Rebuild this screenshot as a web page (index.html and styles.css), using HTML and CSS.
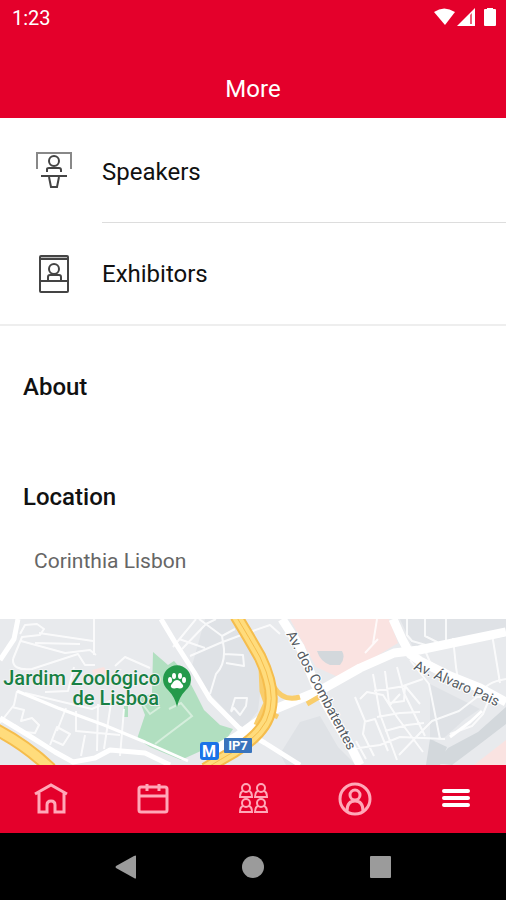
FILE: index.html
```html
<!DOCTYPE html>
<html lang="en">
<head>
<meta charset="utf-8">
<meta name="viewport" content="width=device-width, initial-scale=1">
<title>More</title>
<link rel="stylesheet" href="styles.css">
</head>
<body>
<header class="top">
  <div class="status">
    <span class="clock">1:23</span>
    <svg class="status-icons" viewBox="0 0 64 20" aria-hidden="true">
      <path d="M0 4Q10-3 21 4L11 17Z"/>
      <path d="M41 0V18H23Z"/>
      <path class="signal-gap" d="M36 7V16H38V5Z"/>
      <path d="M53 1V0H59V1H61Q62 1 62 2V17Q62 18 61 18H51Q50 18 50 17V2Q50 1 51 1Z"/>
    </svg>
  </div>
  <h1 class="title">More</h1>
</header>
<main class="content">
  <nav class="menu" aria-label="Event">
    <a class="row" href="#speakers">
      <svg class="row-icon" viewBox="0 0 40 40" aria-hidden="true">
        <path class="soft" d="M3 18V2H37V18"/>
        <circle cx="20" cy="10" r="5"/>
        <path d="M13 21V18Q13 17 15 17H25Q27 17 27 19V21M7 25H33M15 26L17 36H23L25 26"/>
      </svg>
      <span class="row-label">Speakers</span>
    </a>
    <a class="row" href="#exhibitors">
      <svg class="row-icon" viewBox="0 0 40 40" aria-hidden="true">
        <path class="band" d="M7 2H33V5H7Z"/>
        <rect x="6" y="2" width="28" height="36" rx="1"/>
        <path d="M6 5H34M6 27H34M14 26V23Q14 21 16 21H25Q27 21 27 23V26"/>
        <circle cx="20" cy="15" r="5"/>
      </svg>
      <span class="row-label">Exhibitors</span>
    </a>
  </nav>
  <section class="about"><h2 class="heading">About</h2></section>
  <section class="location">
    <h2 class="heading">Location</h2>
    <p class="venue">Corinthia Lisbon</p>
  </section>
  <svg class="map" viewBox="0 0 506 146" preserveAspectRatio="xMidYMid slice" role="img" aria-label="Map of the area around Corinthia Lisbon">
    <rect class="land" width="506" height="146"/>
    <path class="shade" d="M205 0H235L262 58 258 92 243 110 190 54ZM280 135L300 103 320 97 338 128 356 146H286ZM400 0H506V18L415 33ZM430 65L450 75 480 90 465 100 445 118 430 123Z"/>
    <path class="rose" d="M290 0H389L398 24 372 40 338 58 316 48ZM506 121L474 146H506ZM92 51L104 48 108 55 94 58Z"/>
    <path class="slate" d="M317 32H342Q346 39 340 46H330Q320 42 317 32ZM436 144L448 129 478 113 506 88V105L476 128 452 146ZM430 120L447 128 440 146H426Z"/>
    <path class="park" d="M153 33L168 46 174 42 185 54 196 75 204 91 220 106 233 110 224 124 203 131 181 141 150 128 137 120 145 96 138 78 152 75ZM124 87H128V98H124Z"/>
    <path class="trail" d="M137 78L150 95 160 88M155 125L192 97 181 84 169 90"/>
    <g class="lanes">
      <path d="M13 40L22 18 40 16 44 10 37 5 25 6 20 15M21 22L65 34 90 31 96 36M39 14L93 22M94 0V36M35 24L80 25M13 40Q12 52 32 50L78 35 85 46 95 46M115 47L125 38 150 49M17 72L14 86 0 104M25 74L92 90 110 82 126 86M66 89L57 112M74 48L68 72 45 73M12 88L24 91 21 102 32 99 39 106 35 114 24 113 15 106M50 126L57 108 70 115 63 126 52 121M76 92L76 112 120 116M98 85L97 132M111 84L104 130M85 116L81 137M124 90L120 137"/>
      <path d="M173 28L196 0M182 30L206 5 216 0M190 37L220 24 244 15 270 6 280 15M179 20L205 29M199 0L222 17 235 10M222 17L224 30Q225 46 216 55L210 75M224 35L243 36 244 47 226 44M231 92L235 79 247 79 246 87 240 96 234 89 231 93M203 135L215 128 219 140"/>
      <path d="M377 0L373 25M378 20L365 34M407 0V16L412 22 436 29M425 0V17L437 23 435 30M453 19L456 48 459 67M446 0V22M492 15L500 64M424 29L430 43 440 49M410 41L429 65 440 120M373 55L380 95 397 141M385 52L389 84 404 82 405 67M397 48L404 74 425 117M374 72L405 67 420 85M355 78L365 102 363 115 374 137M360 80L367 73 383 76 397 98 423 133M377 98L400 94 420 93M385 112L407 106 424 104M364 103L375 100 388 132M352 130L380 126 400 118 445 120M356 122L366 140M399 136L421 113 432 102 459 92 477 78 490 78 483 95 472 107 450 115M390 86L400 75M403 67L423 60M480 76Q485 63 506 60"/>
    </g>
    <g class="streets">
      <path d="M18 0L14 20 0 41M0 99L28 116 55 133 73 143 95 139 110 131 145 134 170 146"/>
      <path class="narrow" d="M17 72L58 89 104 106 145 123 188 142"/>
      <path d="M161 0L176 25 194 53 210 80 239 109 265 124 300 146"/>
      <path class="wide" d="M282 0L300 28 315 65 336 103 351 128 360 146"/>
      <path class="wide" d="M205 137L239 116 273 91 321 71 360 49 394 34 419 31 506 13"/>
      <path class="wide" d="M393 0L402 20 410 35 420 42 450 57 480 69 506 83"/>
      <path class="narrow" d="M450 118L470 103 482 92"/>
    </g>
    <g class="ramps">
      <path d="M261 48L262 72 266 84 256 106M274 68Q283 83 300 78M307 85L319 78M270 94L278 98"/>
    </g>
    <path class="highway-edge" d="M236 -3Q250 20 260 38Q275 69 270 91Q266 113 235 132Q221 140 205 150M-5 110Q26 126 51 150"/>
    <path class="highway" d="M236 -3Q250 20 260 38Q275 69 270 91Q266 113 235 132Q221 140 205 150M-5 110Q26 126 51 150"/>
    <path class="highway-line" d="M236 -3Q250 20 260 38Q275 69 270 91Q266 113 235 132Q221 140 205 150"/>
    <g class="place">
      <text x="160" y="66" text-anchor="end">Jardim Zoológico</text>
      <text x="159" y="86" text-anchor="end">de Lisboa</text>
    </g>
    <path class="pin" d="M177 88Q175 78 168 71A14 14 0 1 1 186 71Q179 78 177 88Z"/>
    <g class="paw">
      <ellipse cx="170" cy="61" rx="2" ry="3"/><ellipse cx="174" cy="57" rx="2" ry="3"/><ellipse cx="180" cy="57" rx="2" ry="3"/><ellipse cx="184" cy="61" rx="2" ry="3"/>
      <path d="M177 61C180 61 181 64 183 66C184 69 181 70 177 69C173 70 170 69 171 66C173 64 174 61 177 61Z"/>
    </g>
    <rect class="metro" x="200" y="123" width="19" height="18" rx="3"/>
    <text class="badge" x="209" y="138" font-size="16" text-anchor="middle">M</text>
    <rect class="route" x="224" y="119" width="28" height="15" rx="1"/>
    <text class="badge" x="238" y="131" font-size="13" text-anchor="middle">IP7</text>
    <text class="street" transform="translate(286 15) rotate(62)">Av. dos Combatentes</text>
    <text class="street" transform="translate(413 50) rotate(24)">Av. Álvaro Pais</text>
  </svg>
</main>
<nav class="tabs" aria-label="Main">
  <a class="tab" href="#home" aria-label="Home"><svg viewBox="0 0 36 36" aria-hidden="true"><path d="M2 13L18 4 34 13M6 12V31H14V24Q14 20 18 20Q22 20 22 24V31H31V12"/></svg></a>
  <a class="tab" href="#agenda" aria-label="Agenda"><svg viewBox="0 0 36 36" aria-hidden="true"><rect x="5" y="6" width="28" height="25" rx="2"/><path d="M5 15H33M13 3V10M25 3V10"/></svg></a>
  <a class="tab" href="#people" aria-label="People"><svg class="people" viewBox="0 0 36 36" aria-hidden="true"><g id="person"><circle cx="11" cy="7" r="4"/><path d="M8 10Q5 11 5 16H17Q17 11 14 10"/></g><use href="#person" x="15"/><use href="#person" y="15"/><use href="#person" x="15" y="15"/></svg></a>
  <a class="tab" href="#profile" aria-label="Profile"><svg viewBox="0 0 36 36" aria-hidden="true"><circle cx="19" cy="18" r="15"/><circle cx="19" cy="14" r="5"/><path d="M11 30Q11 20 19 20Q27 20 27 30"/></svg></a>
  <a class="tab active" href="#more" aria-label="More" aria-current="page"><svg viewBox="0 0 36 36" aria-hidden="true"><path d="M7 10H31M7 17H31M7 24H31"/></svg></a>
</nav>
<footer class="system">
  <button type="button" aria-label="Back"><svg viewBox="0 0 24 24" aria-hidden="true"><path d="M23 1V23Q23 24 21 23L3 13Q2 12 3 11L21 1Q23 0 23 1Z"/></svg></button>
  <button type="button" aria-label="Home screen"><svg viewBox="0 0 24 24" aria-hidden="true"><circle cx="12" cy="12" r="11"/></svg></button>
  <button type="button" aria-label="Recent apps"><svg viewBox="0 0 24 24" aria-hidden="true"><rect x="1" y="1" width="21" height="22" rx="1"/></svg></button>
</footer>
</body>
</html>
```
FILE: styles.css
```css
* { box-sizing: border-box; }
body {
  margin: 0;
  min-height: 100vh;
  display: flex;
  flex-direction: column;
  background: #fff;
  color: #111;
  font-family: Roboto, "Liberation Sans", sans-serif;
}
h1, h2, p { margin: 0; }
svg { display: block; }
a { color: inherit; text-decoration: none; }

.top { background: #e4002b; color: #fff; padding-bottom: 13px; }
.status {
  height: 36px;
  padding: 0 8px 0 12px;
  display: flex;
  align-items: center;
  justify-content: space-between;
}
.clock { font-size: 20px; line-height: 24px; }
.status-icons { width: 64px; height: 20px; fill: #fff; }
.status-icons .signal-gap { fill: #ee6078; }
.title {
  padding-top: 37px;
  font-size: 24px;
  line-height: 32px;
  font-weight: 400;
  text-align: center;
}

.content { flex: 1; display: flex; flex-direction: column; }
.menu { border-bottom: 2px solid #eee; }
.row { display: flex; align-items: center; gap: 28px; padding-left: 34px; }
.row-icon {
  width: 40px;
  height: 40px;
  fill: none;
  stroke: #444;
  stroke-width: 2;
}
.row-icon .soft { stroke: #888; }
.row-icon .band { fill: #bbb; stroke: none; }
.row-label {
  flex: 1;
  padding: 38px 0 34px;
  font-size: 24px;
  line-height: 32px;
}
.row + .row .row-label { padding-top: 35px; }
.row:first-child .row-label { border-bottom: 1px solid #ddd; }
.heading { font-size: 24px; line-height: 32px; font-weight: 500; }
.about { padding: 45px 23px 0; }
.location { padding: 78px 23px 42px; }
.venue {
  padding: 32px 11px 0;
  color: #666;
  font-size: 21px;
  line-height: 32px;
}

.map { width: 100%; flex: 1; min-height: 146px; font-family: Roboto, sans-serif; }
.land { fill: #e8eaed; }
.shade { fill: #dfe2e6; }
.rose { fill: #fae3e1; }
.slate { fill: #d3d8dc; }
.park { fill: #b1dfc0; }
.trail { fill: none; stroke: #d5eedc; stroke-width: 2; }
.lanes, .streets { fill: none; stroke: #fff; stroke-linejoin: round; }
.lanes { stroke-width: 2; opacity: .8; }
.streets { stroke-width: 5; }
.streets .narrow { stroke-width: 3; }
.streets .wide { stroke-width: 9; }
.ramps { fill: none; stroke: #f9cd6b; stroke-width: 5; }
.highway-edge, .highway, .highway-line { fill: none; }
.highway-edge { stroke: #f5bd4d; stroke-width: 13; }
.highway { stroke: #ffdc7c; stroke-width: 9; }
.highway-line { stroke: #f5bd4d; stroke-width: 1; }
.place {
  fill: #188044;
  stroke: #f1f3f4;
  stroke-width: 2;
  paint-order: stroke;
  font-size: 20px;
  font-weight: 500;
}
.pin { fill: #249a4b; }
.paw { fill: #fff; }
.metro { fill: #1a73e8; }
.route { fill: #3974bd; }
.badge { fill: #fff; font-weight: 700; }
.street {
  fill: #555b62;
  stroke: #fff;
  stroke-width: 2;
  paint-order: stroke;
  font-size: 14px;
}

.tabs {
  height: 68px;
  display: grid;
  grid-template-columns: repeat(5, 1fr);
  background: #e4002b;
}
.tab { display: flex; align-items: center; justify-content: center; }
.tab svg {
  width: 36px;
  height: 36px;
  fill: none;
  stroke: #ffa8b8;
  stroke-width: 3;
}
.tab .people { stroke-width: 2; }
.tab.active svg { stroke: #fff; stroke-width: 4; stroke-linecap: round; }

.system {
  height: 67px;
  padding: 0 12%;
  display: grid;
  grid-template-columns: repeat(3, 1fr);
  background: #000;
}
.system button {
  display: flex;
  align-items: center;
  justify-content: center;
  padding: 0;
  border: 0;
  background: none;
}
.system svg { width: 24px; height: 24px; fill: #9b9b9b; }
```
